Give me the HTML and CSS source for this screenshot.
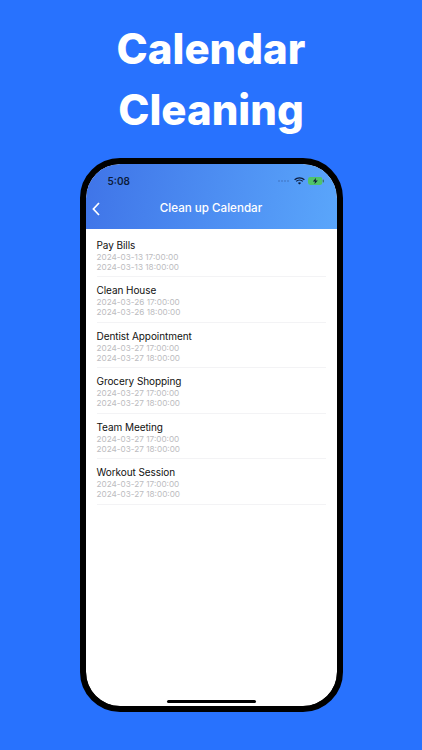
FILE: index.html
```html
<!DOCTYPE html>
<html lang="en">
<head>
<meta charset="utf-8">
<title>Calendar Cleaning</title>
<link rel="stylesheet" href="styles.css">
</head>
<body>
<main class="page">
  <h1 class="headline">Calendar<br>Cleaning</h1>
  <div class="phone">
    <div class="screen">
      <header class="top">
        <div class="status">
          <span class="time">5:08</span>
          <span class="status-icons">
            <svg class="dots" width="12" height="2" viewBox="0 0 12 2"><g fill="#3f6fb8"><circle cx="1" cy="1" r=".8"/><circle cx="4" cy="1" r=".8"/><circle cx="7" cy="1" r=".8"/><circle cx="10" cy="1" r=".8"/></g></svg>
            <svg width="11" height="8" viewBox="0 0 11 8"><path d="M.6 2.8a7 7 0 0 1 9.8 0M2.2 4.4a4.7 4.7 0 0 1 6.6 0" fill="none" stroke="#0c1c3c" stroke-width="1.3"/><path d="M3.9 5.9a2.3 2.3 0 0 1 3.2 0L5.5 7.6z" fill="#0c1c3c"/></svg>
            <svg width="16" height="8" viewBox="0 0 16 8"><rect x="0" y="0" width="14.4" height="8" rx="2.4" fill="#4fc46a"/><rect x="14.8" y="2.6" width="1.2" height="2.8" rx=".6" fill="#3a6f70"/><path d="M8.2.8 4.8 4.6h2.3L6.4 7.2l3.4-3.8H7.5z" fill="#0c1c3c"/></svg>
          </span>
        </div>
        <div class="nav">
          <svg class="back" width="8" height="14" viewBox="0 0 8 14"><path d="M7 1 1.4 7 7 13" fill="none" stroke="#fff" stroke-width="1.7"/></svg>
          <span class="nav-title">Clean up Calendar</span>
        </div>
      </header>
      <ul class="events">
        <li class="event"><div class="name">Pay Bills</div><div class="date">2024-03-13 17:00:00</div><div class="date">2024-03-13 18:00:00</div></li>
        <li class="event"><div class="name">Clean House</div><div class="date">2024-03-26 17:00:00</div><div class="date">2024-03-26 18:00:00</div></li>
        <li class="event"><div class="name">Dentist Appointment</div><div class="date">2024-03-27 17:00:00</div><div class="date">2024-03-27 18:00:00</div></li>
        <li class="event"><div class="name">Grocery Shopping</div><div class="date">2024-03-27 17:00:00</div><div class="date">2024-03-27 18:00:00</div></li>
        <li class="event"><div class="name">Team Meeting</div><div class="date">2024-03-27 17:00:00</div><div class="date">2024-03-27 18:00:00</div></li>
        <li class="event"><div class="name">Workout Session</div><div class="date">2024-03-27 17:00:00</div><div class="date">2024-03-27 18:00:00</div></li>
      </ul>
      <div class="home-bar"></div>
    </div>
  </div>
</main>
</body>
</html>
```
FILE: styles.css
```css
* { box-sizing: border-box; }
html, body { margin: 0; padding: 0; }
body {
  width: 422px;
  height: 750px;
  overflow: hidden;
  background: #2872fe;
  font-family: "Inter", "Liberation Sans", sans-serif;
}
.page {
  display: flex;
  flex-direction: column;
  align-items: center;
  height: 750px;
  padding-top: 18px;
}
.headline {
  margin: 0;
  color: #fff;
  font-size: 42px;
  font-weight: 800;
  line-height: 61px;
  text-align: center;
}
.phone {
  margin-top: 18px;
  width: 263px;
  height: 554px;
  border: 6px solid #000;
  border-radius: 40px;
  background: #000;
  overflow: hidden;
}
.screen {
  position: relative;
  height: 100%;
  background: #fff;
  border-radius: 34px;
  overflow: hidden;
}
.top {
  height: 65px;
  padding: 11px 13px 0 10px;
  background: linear-gradient(100deg, #3f74e8 0%, #5aa6fb 100%);
}
.status {
  display: flex;
  justify-content: space-between;
  align-items: center;
  height: 12px;
  padding-left: 12px;
}
.time {
  color: #0c1c3c;
  font-size: 10px;
  font-weight: 600;
}
.status-icons {
  display: flex;
  align-items: center;
  gap: 3px;
}
.dots { margin-right: 1px; }
.nav {
  position: relative;
  display: flex;
  justify-content: center;
  align-items: center;
  height: 22px;
  margin-top: 10px;
  margin-right: -3px;
}
.back {
  position: absolute;
  left: -4px;
  top: 5px;
}
.nav-title {
  color: #fff;
  font-size: 11.6px;
  font-weight: 500;
}
.events {
  list-style: none;
  margin: 0;
  padding: 2.5px 11px 0;
}
.event {
  height: 45.5px;
  padding-top: 6px;
  border-bottom: 1px solid #f3f3f5;
}
.name {
  color: #111;
  font-size: 10px;
  letter-spacing: -0.07px;
  line-height: 14px;
}
.date {
  color: #bcbcc0;
  font-size: 8.2px;
  line-height: 10px;
}
.home-bar {
  position: absolute;
  left: 81px;
  bottom: 3px;
  width: 89px;
  height: 3px;
  border-radius: 2px;
  background: #000;
}
```
